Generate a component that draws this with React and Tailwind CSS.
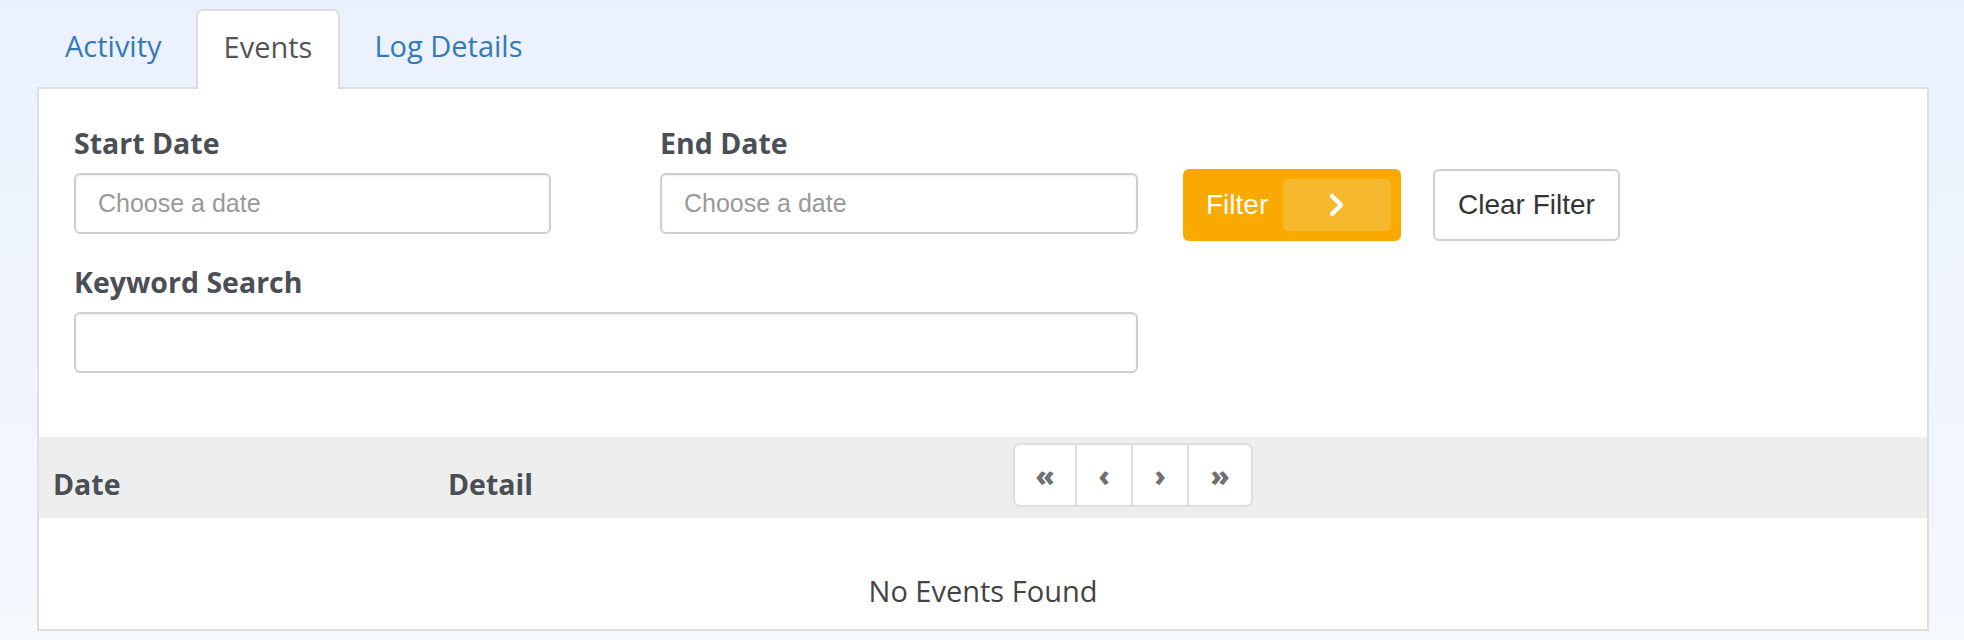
import React from 'react';

const Label = ({ children }) => (
  <label className="block font-['Open_Sans',sans-serif] text-[28.5px] font-bold leading-[34px] text-[#4a4e55]">
    {children}
  </label>
);

const DateInput = ({ width }) => (
  <input
    type="text"
    placeholder="Choose a date"
    className={`mt-[13px] h-[61px] ${width} rounded-[6px] border-2 border-[#cfcfcf] bg-white px-[22px] font-['Liberation_Sans',Arial,sans-serif] text-[25px] text-[#333] shadow-[inset_0_1px_2px_rgba(0,0,0,0.08)] outline-none placeholder:text-[#999]`}
  />
);

const PageButton = ({ children, width, last }) => (
  <button
    className={`flex h-full ${width} items-center justify-center font-['Open_Sans',sans-serif] text-[28px] font-extrabold leading-none text-[#707070] ${last ? '' : 'border-r-2 border-[#dedede]'}`}
  >
    {children}
  </button>
);

export default function App() {
  return (
    <div className="h-[640px] w-full bg-linear-to-b from-[#eaf1fd] to-[#f5f8fd] pt-[9px]">
      {/* tabs */}
      <div className="flex gap-[6px] pl-[37px] font-['Open_Sans',sans-serif] text-[29px]">
        <div className="flex h-[78px] items-center border-2 border-transparent px-[26px] pb-[4px] text-[#337ab7]">Activity</div>
        <div className="relative z-10 -mb-[2px] flex h-[80px] items-center rounded-t-[7px] border-2 border-b-0 border-[#dedede] bg-white px-[26px] pb-[6px] text-[#555]">
          Events
        </div>
        <div className="flex h-[78px] items-center border-2 border-transparent px-[26px] pb-[4px] text-[#337ab7]">Log Details</div>
      </div>

      {/* panel */}
      <div className="ml-[37px] w-[1892px] border-2 border-[#dedede] bg-white">
        <div className="pb-[64px] pl-[35px] pt-[37px]">
          <div className="flex h-[108px] items-start">
            <div className="flex w-[477px] flex-col">
              <Label>Start Date</Label>
              <DateInput width="w-[477px]" />
            </div>
            <div className="ml-[109px] flex w-[478px] flex-col">
              <Label>End Date</Label>
              <DateInput width="w-[478px]" />
            </div>
            <button className="ml-[45px] mt-[43px] flex h-[72px] w-[218px] shrink-0 items-center rounded-[6px] bg-[#f9a900] py-[10px] pl-[23px] pr-[10px] font-['Liberation_Sans',Arial,sans-serif] text-[28px] text-white">
              <span>Filter</span>
              <span className="ml-auto flex h-full w-[108px] items-center justify-center rounded-[5px] bg-[#f6b82c]">
                <svg width="20" height="26" viewBox="0 0 20 26" fill="none">
                  <path d="M5 4 L14 13 L5 22" stroke="white" strokeWidth="4.5" strokeLinecap="round" strokeLinejoin="round" />
                </svg>
              </span>
            </button>
            <button className="ml-[32px] mt-[43px] h-[72px] w-[187px] shrink-0 rounded-[6px] border-2 border-[#cfcfcf] bg-white font-['Liberation_Sans',Arial,sans-serif] text-[28px] text-[#333]">
              Clear Filter
            </button>
          </div>

          <div className="mt-[31px] flex flex-col">
            <Label>Keyword Search</Label>
            <input
              type="text"
              className="mt-[13px] h-[61px] w-[1064px] rounded-[6px] border-2 border-[#cfcfcf] bg-white px-[22px] font-['Liberation_Sans',Arial,sans-serif] text-[25px] shadow-[inset_0_1px_2px_rgba(0,0,0,0.08)] outline-none"
            />
          </div>
        </div>

        {/* table header */}
        <div className="flex h-[81px] bg-[#eeeeee] font-['Open_Sans',sans-serif] text-[28.5px] font-bold leading-[34px] text-[#4a4e55]">
          <div className="w-[409px] pl-[14px] pt-[30px]">Date</div>
          <div className="w-[565px] pt-[30px]">Detail</div>
          <div className="mt-[6px] flex h-[64px] overflow-hidden rounded-[7px] border-2 border-[#dedede] bg-white">
            <PageButton width="w-[62px]">«</PageButton>
            <PageButton width="w-[56px]">‹</PageButton>
            <PageButton width="w-[56px]">›</PageButton>
            <PageButton width="w-[62px]" last>»</PageButton>
          </div>
        </div>

        <div className="pb-[21px] pt-[56px] text-center font-['Open_Sans',sans-serif] text-[29px] leading-[34px] text-[#444]">
          No Events Found
        </div>
      </div>
    </div>
  );
}
